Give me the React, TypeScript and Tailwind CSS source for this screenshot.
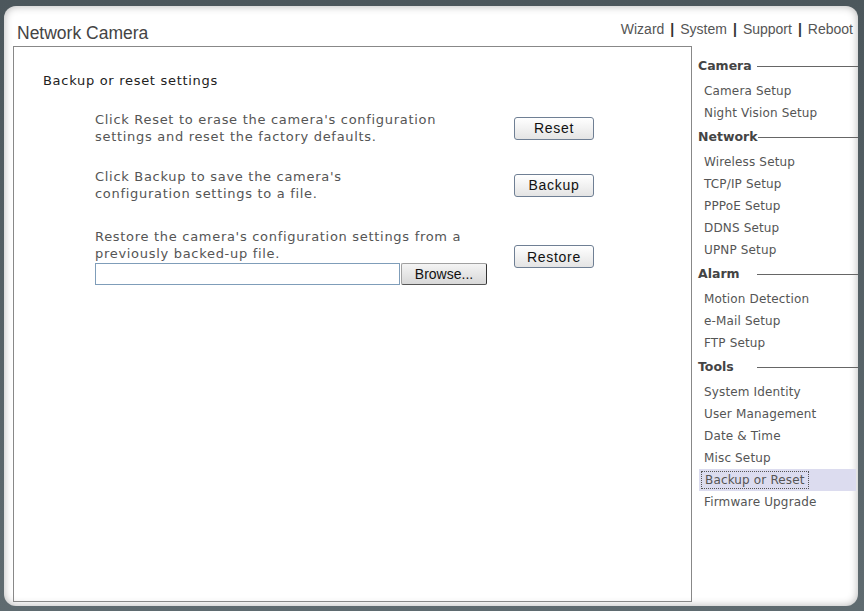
import React from 'react';

type NavGroup = {
  title: string;
  items: string[];
};

const groups: NavGroup[] = [
  { title: 'Camera', items: ['Camera Setup', 'Night Vision Setup'] },
  { title: 'Network', items: ['Wireless Setup', 'TCP/IP Setup', 'PPPoE Setup', 'DDNS Setup', 'UPNP Setup'] },
  { title: 'Alarm', items: ['Motion Detection', 'e-Mail Setup', 'FTP Setup'] },
  {
    title: 'Tools',
    items: ['System Identity', 'User Management', 'Date & Time', 'Misc Setup', 'Backup or Reset', 'Firmware Upgrade'],
  },
];

const ACTIVE = 'Backup or Reset';

const topLinks = ['Wizard', 'System', 'Support', 'Reboot'];

const ActionButton: React.FC<{ label: string }> = ({ label }) => (
  <button className="w-[80px] h-[23px] shrink-0 rounded-[3px] border border-[#6f7f94] bg-gradient-to-b from-white to-[#e4e4e4] text-[14px] leading-none text-[#111] font-['Liberation_Sans',Arial,sans-serif]">
    {label}
  </button>
);

const Sidebar: React.FC = () => (
  <div className="w-[161px] shrink-0 pt-[7px] font-['DejaVu_Sans',Verdana,sans-serif]">
    {groups.map((group) => (
      <div key={group.title}>
        {/* group header with rule */}
        <div className="h-[27px] flex items-center pl-[1px]">
          <span className="min-w-[59px] text-[12.5px] font-bold text-[#444]">{group.title}</span>
          <span className="flex-1 h-px bg-[#666]" />
        </div>
        {group.items.map((item) =>
          item === ACTIVE ? (
            <div key={item} className="h-[22px] mx-[2px] flex items-center bg-[#dcdcef]">
              <span className="ml-[2px] px-[3px] border border-dotted border-[#555] text-[12px] tracking-[0.15px] leading-[16px] text-[#555]">
                {item}
              </span>
            </div>
          ) : (
            <div key={item} className="h-[22px] flex items-center pl-[7px] text-[12px] tracking-[0.15px] text-[#555]">
              {item}
            </div>
          )
        )}
      </div>
    ))}
  </div>
);

const App: React.FC = () => {
  return (
    <div className="w-[864px] h-[611px] bg-gradient-to-b from-[#4c575c] to-[#5f6b70] pt-[6px] pl-[4px] pr-[6px] pb-[5px]">
      <div className="w-full h-full rounded-[12px] bg-white shadow-[inset_0_0_8px_rgba(0,0,0,0.3)] flex flex-col px-[9px] pb-[4px]">
        {/* Header */}
        <div className="h-[40px] shrink-0 mr-[-4px] flex items-start justify-between font-['Liberation_Sans',Arial,sans-serif]">
          <div className="pl-[4px] pt-[19px] text-[17.5px] text-[#444] leading-none">Network Camera</div>
          <div className="pt-[16px] flex items-center text-[14px] text-[#555] leading-none">
            {topLinks.map((link, i) => (
              <React.Fragment key={link}>
                {i > 0 && <span className="mx-[6px] text-[#333] font-bold">|</span>}
                <span>{link}</span>
              </React.Fragment>
            ))}
          </div>
        </div>

        <div className="flex-1 flex gap-[5px]">
          {/* Main content */}
          <div className="w-[679px] shrink-0 border border-[#888] pt-[25px] pl-[29px] font-['DejaVu_Sans',Verdana,sans-serif] text-[13px] tracking-[0.7px] leading-[17px]">
            <div className="text-[#222]">Backup or reset settings</div>

            <div className="mt-[22px] pl-[52px] flex flex-col">
              <div className="flex items-center">
                <div className="w-[419px] text-[#555] whitespace-nowrap">
                  Click Reset to erase the camera's configuration
                  <br />
                  settings and reset the factory defaults.
                </div>
                <ActionButton label="Reset" />
              </div>

              <div className="mt-[23px] flex items-center">
                <div className="w-[419px] text-[#555] whitespace-nowrap">
                  Click Backup to save the camera's
                  <br />
                  configuration settings to a file.
                </div>
                <ActionButton label="Backup" />
              </div>

              <div className="mt-[26px] flex items-center">
                <div className="w-[419px] text-[#555]">
                  <div className="whitespace-nowrap">
                    Restore the camera's configuration settings from a
                    <br />
                    previously backed-up file.
                  </div>
                  <div className="flex items-center gap-[1px] mt-[1px]">
                    <input
                      type="text"
                      className="w-[305px] h-[22px] border border-[#7f9db9] bg-white outline-none"
                    />
                    <button className="w-[86px] h-[22px] border border-[#a0a0a0] border-r-[#333] border-b-[#555] rounded-[2px] bg-gradient-to-b from-[#f4f4f4] to-[#d8d8d8] text-[14px] tracking-normal leading-none text-[#111] font-['Liberation_Sans',Arial,sans-serif]">
                      Browse...
                    </button>
                  </div>
                </div>
                <ActionButton label="Restore" />
              </div>
            </div>
          </div>

          <Sidebar />
        </div>
      </div>
    </div>
  );
};

export default App;
